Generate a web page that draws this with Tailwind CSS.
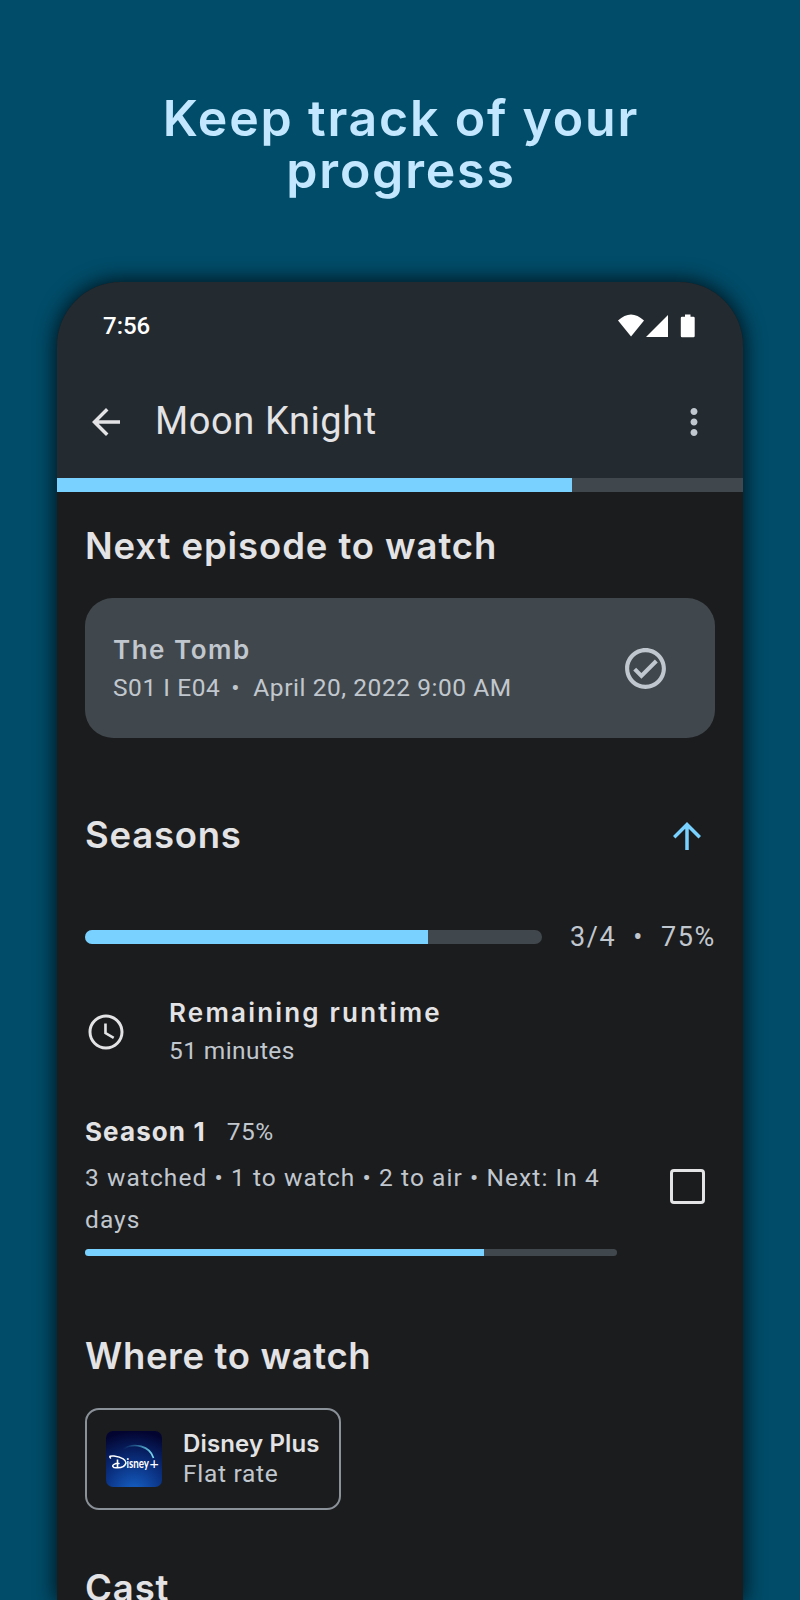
<!DOCTYPE html>
<html lang="en">
<head>
    <meta charset="UTF-8">
    <meta name="viewport" content="width=device-width, initial-scale=1.0">
    <title>Moon Knight</title>
    <!-- Tailwind CSS -->
    <script src="https://cdn.jsdelivr.net/npm/@tailwindcss/browser@4"></script>
</head>
<body class="flex flex-col bg-[#004c69] h-[1600px] overflow-hidden font-['Roboto',sans-serif] whitespace-nowrap">
    <h1 class="pt-[92px] pl-0.5 text-center font-['Inter',sans-serif] font-semibold text-[50px] leading-[52px] tracking-[1.8px] text-[#c3e7ff]">Keep track of your<br>progress</h1>

    <div class="mt-[86px] mx-[57px] flex-1 min-h-0 overflow-hidden rounded-t-[64px] bg-[#1b1c1e] text-[#e3e3e5] shadow-[0_0_20px_2px_rgba(0,0,0,0.75)]">
        <header class="h-[196px] bg-[#232a30]">
            <!-- Status bar -->
            <div class="flex h-[82px] items-center justify-between pt-[6px] pl-[46px] pr-[48px] text-white">
                <span class="text-[24px] font-medium">7:56</span>
                <svg class="w-[77px] h-6" viewBox="0 0 77 24" fill="currentColor">
                    <path d="M0 6.5Q13-5.5 26 6.5L13 22.500Z" />
                    <path d="M50 1V23H28Z" />
                    <path d="M67 .5h5.500v2.300h3a1.200 1.200 0 0 1 1.200 1.200V22a1.200 1.200 0 0 1-1.200 1.200H64A1.200 1.200 0 0 1 62.800 22V4A1.200 1.200 0 0 1 64 2.800h3Z" />
                </svg>
            </div>
            <!-- App bar -->
            <div class="flex h-[114px] items-center pl-7 pr-7 pt-px">
                <svg class="size-[42px]" viewBox="0 0 24 24" fill="currentColor"><path d="M20 11H7.830l5.590-5.590L12 4l-8 8 8 8 1.410-1.410L7.830 13H20v-2z" /></svg>
                <h2 class="ml-7 flex-1 text-[38px] tracking-[0.6px]">Moon Knight</h2>
                <svg class="size-[42px] text-[#c1c7ce]" viewBox="0 0 24 24" fill="currentColor"><path d="M12 8c1.100 0 2-.9 2-2s-.9-2-2-2-2 .9-2 2 .9 2 2 2zm0 2c-1.100 0-2 .9-2 2s.9 2 2 2 2-.9 2-2-.9-2-2-2zm0 6c-1.100 0-2 .9-2 2s.9 2 2 2 2-.9 2-2-.9-2-2-2z" /></svg>
            </div>
        </header>
        <div class="h-[14px] bg-[#41484d]"><div class="h-full bg-[#79d1ff]" style="width: 75%"></div></div>

        <main class="px-7 pt-8">
            <h3 class="font-['Inter',sans-serif] text-[36.5px] leading-[44px] font-semibold tracking-[0.9px]">Next episode to watch</h3>
            <div class="mt-[30px] flex h-[140px] items-center justify-between rounded-[28px] bg-[#41484d] pl-7 pr-[45px] text-[#c1c7ce]">
                <div class="pt-px text-[24.5px] leading-[38px]">
                    <p class="font-['Inter',sans-serif] text-[26px] font-semibold tracking-[1.5px]">The Tomb</p>
                    <p class="flex tracking-[0.55px]"><span>S01 I E04</span><span class="ml-[11px] w-[22px]">•</span><span>April 20, 2022 9:00 AM</span></p>
                </div>
                <svg class="size-[49px]" viewBox="0 0 24 24" fill="currentColor"><path d="M12 2C6.480 2 2 6.480 2 12s4.480 10 10 10 10-4.480 10-10S17.520 2 12 2zm0 18c-4.410 0-8-3.590-8-8s3.590-8 8-8 8 3.590 8 8-3.590 8-8 8zm4.590-12.420L10 14.170l-2.590-2.580L6 13l4 4 8-8z" /></svg>
            </div>

            <div class="mt-[75px] flex h-[44px] items-center justify-between pr-[7px]">
                <h3 class="font-['Inter',sans-serif] text-[36.5px] leading-[44px] font-semibold tracking-[0.75px]">Seasons</h3>
                <svg class="mt-0.5 size-[42px] text-[#79d1ff]" viewBox="0 0 24 24" fill="currentColor"><path d="M4 12l1.410 1.410L11 7.830V20h2V7.830l5.580 5.590L20 12l-8-8-8 8z" /></svg>
            </div>
            <div class="mt-[61px] flex h-[38px] items-center">
                <div class="h-[14px] w-[457px] overflow-hidden rounded-full bg-[#41484d]"><div class="h-full bg-[#79d1ff]" style="width: 75%"></div></div>
                <p class="ml-7 flex flex-1 justify-between text-[27px] tracking-[1.6px] text-[#c1c7ce]"><span>3/4</span><span>•</span><span class="-mr-px">75%</span></p>
            </div>

            <div class="mt-[38px] flex items-center leading-[38px]">
                <svg class="size-[42px]" viewBox="0 0 24 24" fill="currentColor"><path d="M11.990 2C6.470 2 2 6.480 2 12s4.470 10 9.990 10C17.520 22 22 17.520 22 12S17.520 2 11.990 2zM12 20.300c-4.580 0-8.300-3.720-8.300-8.300s3.720-8.300 8.300-8.300 8.300 3.720 8.300 8.300-3.720 8.300-8.300 8.300z" /><path d="M11.700 7.200V12.600L16.400 15.400" fill="none" stroke="currentColor" stroke-width="1.500" /></svg>
                <div class="ml-[42px]">
                    <p class="font-['Inter',sans-serif] text-[26px] font-semibold tracking-[2.2px]">Remaining runtime</p>
                    <p class="text-[24.5px] tracking-[0.4px] text-[#c1c7ce]">51 minutes</p>
                </div>
            </div>

            <div class="mt-[43px] flex items-center justify-between pr-[10px]">
                <div class="w-[532px] text-[24.5px] text-[#c1c7ce]">
                    <p class="flex leading-[38px]"><span class="font-['Inter',sans-serif] text-[26px] font-bold tracking-[1.1px] text-[#e3e3e5]">Season 1</span><span class="ml-[21px] tracking-[0.5px]">75%</span></p>
                    <p class="mt-[6px] whitespace-normal leading-[42px] tracking-[1.07px]">3 watched • 1 to watch • 2 to air • Next: In 4 days</p>
                    <div class="mt-2 h-[7px] overflow-hidden rounded-full bg-[#41484d]"><div class="h-full bg-[#79d1ff]" style="width: 75%"></div></div>
                </div>
                <div class="mt-[3px] size-[35px] rounded-[4px] border-3 border-[#e3e3e5]"></div>
            </div>

            <h3 class="mt-[78px] font-['Inter',sans-serif] text-[36.5px] leading-[44px] font-semibold tracking-[0.65px]">Where to watch</h3>
            <div class="mt-[30px] flex h-[102px] w-[256px] items-center rounded-[14px] border-2 border-[#8b9198] pl-[19px]">
                <svg class="size-14 rounded-[7px]" viewBox="0 0 56 56">
                    <defs>
                        <radialGradient id="logo-bg" cx=".5" cy="1.100" r="1.100">
                            <stop offset="0" stop-color="#1663c8" />
                            <stop offset=".5" stop-color="#0a3080" />
                            <stop offset="1" stop-color="#03042f" />
                        </radialGradient>
                        <linearGradient id="logo-arc">
                            <stop offset="0" stop-color="#2fa9cf" stop-opacity="0" />
                            <stop offset="1" stop-color="#7fdcf2" />
                        </linearGradient>
                    </defs>
                    <rect width="56" height="56" fill="url(#logo-bg)" />
                    <path d="M17 18C28 11 44 15 47.500 27" fill="none" stroke="url(#logo-arc)" stroke-width="1.600" />
                    <path d="M4.500 27Q2 24.500 8 25Q20 27 20 32Q18 38 8 36.500Q4.500 34.500 10 32.500H13" fill="none" stroke="#fff" stroke-width="1.500" stroke-linecap="round" />
                    <path d="M11.500 28.500V37" stroke="#fff" stroke-width="1.600" />
                    <text x="20.500" y="36.500" fill="#fff" font-family="Lato, sans-serif" font-size="13" font-weight="700" textLength="22.500" lengthAdjust="spacingAndGlyphs">isney</text>
                    <text x="43.500" y="38" fill="#fff" font-family="Lato, sans-serif" font-size="16">+</text>
                </svg>
                <div class="ml-[21px] text-[24.5px] leading-[30px]">
                    <p class="font-['Inter',sans-serif] text-[24px] font-semibold tracking-[0.15px]">Disney Plus</p>
                    <p class="tracking-[0.7px] text-[#c1c7ce]">Flat rate</p>
                </div>
            </div>

            <h3 class="mt-[56px] font-['Inter',sans-serif] text-[36.5px] leading-[44px] font-semibold tracking-[0.9px]">Cast</h3>
        </main>
    </div>
</body>
</html>
